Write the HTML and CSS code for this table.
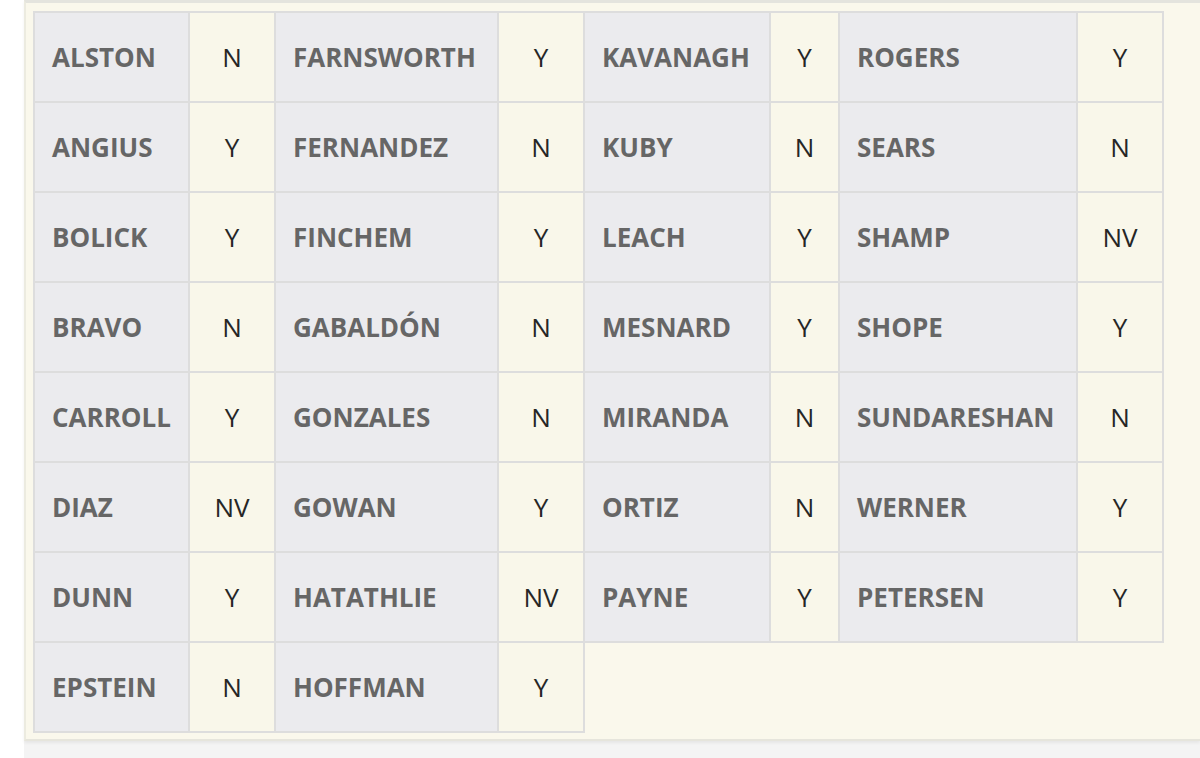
FILE: index.html
```html
<!DOCTYPE html>
<html lang="en">
<head>
<meta charset="utf-8">
<title>Roll call</title>
<link rel="stylesheet" href="styles.css">
</head>
<body>
<div class="page">
  <div class="panel">
    <table class="votes">
      <colgroup>
        <col class="c1"><col class="v1"><col class="c2"><col class="v2">
        <col class="c3"><col class="v3"><col class="c4"><col class="v4">
      </colgroup>
      <tbody>
        <tr><td class="name">ALSTON</td><td class="vote">N</td><td class="name">FARNSWORTH</td><td class="vote">Y</td><td class="name">KAVANAGH</td><td class="vote">Y</td><td class="name">ROGERS</td><td class="vote">Y</td></tr>
        <tr><td class="name">ANGIUS</td><td class="vote">Y</td><td class="name">FERNANDEZ</td><td class="vote">N</td><td class="name">KUBY</td><td class="vote">N</td><td class="name">SEARS</td><td class="vote">N</td></tr>
        <tr><td class="name">BOLICK</td><td class="vote">Y</td><td class="name">FINCHEM</td><td class="vote">Y</td><td class="name">LEACH</td><td class="vote">Y</td><td class="name">SHAMP</td><td class="vote">NV</td></tr>
        <tr><td class="name">BRAVO</td><td class="vote">N</td><td class="name">GABALDÓN</td><td class="vote">N</td><td class="name">MESNARD</td><td class="vote">Y</td><td class="name">SHOPE</td><td class="vote">Y</td></tr>
        <tr><td class="name">CARROLL</td><td class="vote">Y</td><td class="name">GONZALES</td><td class="vote">N</td><td class="name">MIRANDA</td><td class="vote">N</td><td class="name">SUNDARESHAN</td><td class="vote">N</td></tr>
        <tr><td class="name">DIAZ</td><td class="vote">NV</td><td class="name">GOWAN</td><td class="vote">Y</td><td class="name">ORTIZ</td><td class="vote">N</td><td class="name">WERNER</td><td class="vote">Y</td></tr>
        <tr><td class="name">DUNN</td><td class="vote">Y</td><td class="name">HATATHLIE</td><td class="vote">NV</td><td class="name">PAYNE</td><td class="vote">Y</td><td class="name">PETERSEN</td><td class="vote">Y</td></tr>
        <tr><td class="name">EPSTEIN</td><td class="vote">N</td><td class="name">HOFFMAN</td><td class="vote">Y</td></tr>
      </tbody>
    </table>
  </div>
</div>
</body>
</html>
```

FILE: styles.css
```css
html, body {
  margin: 0;
  padding: 0;
}
body {
  background: #ffffff;
  font-family: "Open Sans", "Noto Sans", sans-serif;
  height: 758px;
  overflow: hidden;
}
.page {
  padding-left: 24px;
  background: #f4f4f4;
  height: 758px;
  background-image: linear-gradient(#ffffff, #ffffff);
  background-size: 24px 100%;
  background-repeat: no-repeat;
}
.panel {
  background: #faf8ec;
  border-top: 3px solid #e4e4de;
  border-left: 2px solid #ecebe0;
  border-bottom: 2px solid #e6e5dc;
  padding: 8px 0 6px 7px;
  box-shadow: 0 2px 3px rgba(0,0,0,0.06);
}
.votes {
  border-collapse: collapse;
  table-layout: fixed;
  width: 1129px;
}
.c1 { width: 155px; }
.v1 { width: 86px; }
.c2 { width: 223px; }
.v2 { width: 86px; }
.c3 { width: 186px; }
.v3 { width: 69px; }
.c4 { width: 238px; }
.v4 { width: 86px; }
.votes tr {
  height: 90px;
}
.votes td {
  border: 2px solid #dddddd;
  padding: 0;
  font-size: 26px;
  line-height: 1;
  vertical-align: middle;
}
.name {
  background: #ebebee;
  color: #666666;
  font-weight: 700;
  padding-left: 17px !important;
  white-space: nowrap;
}
.vote {
  background: #f9f7ea;
  color: #262626;
  text-align: center;
  font-weight: 500;
}
```
